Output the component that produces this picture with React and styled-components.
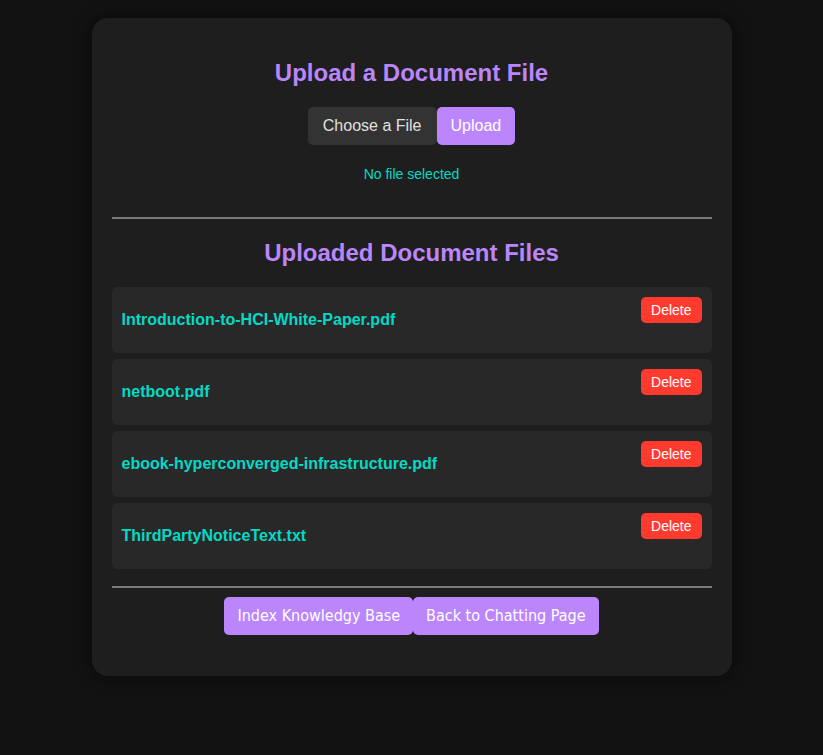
import React from 'react';
import styled, { createGlobalStyle } from 'styled-components';

const files = [
  'Introduction-to-HCI-White-Paper.pdf',
  'netboot.pdf',
  'ebook-hyperconverged-infrastructure.pdf',
  'ThirdPartyNoticeText.txt',
];

const App = () => {
  return (
    <>
      <GlobalStyle />
      <Card>
        <Heading>Upload a Document File</Heading>
        <UploadRow>
          <ChooseLabel>Choose a File</ChooseLabel>
          <UploadButton>Upload</UploadButton>
        </UploadRow>
        <Status>No file selected</Status>
        <Divider />
        <Heading $top={20}>Uploaded Document Files</Heading>
        <FileList>
          {files.map((name) => (
            <FileItem key={name}>
              <FileName>{name}</FileName>
              <DeleteButton>Delete</DeleteButton>
            </FileItem>
          ))}
        </FileList>
        <Divider $top={17} />
        <ActionRow>
          <ActionButton>Index Knowledgy Base</ActionButton>
          <ActionButton>Back to Chatting Page</ActionButton>
        </ActionRow>
      </Card>
    </>
  );
};

export default App;

const GlobalStyle = createGlobalStyle`
  html, body {
    margin: 0;
    background: #121212;
    font-family: "Liberation Sans", Arial, sans-serif;
  }
  body {
    min-height: 755px;
  }
`;

const Card = styled.div`
  width: 600px;
  margin: 18px auto 0;
  padding: 21px 20px 41px;
  background: #1e1e1e;
  border-radius: 16px;
  box-shadow: 0 0 18px rgba(0, 0, 0, 0.55);
  display: flex;
  flex-direction: column;
  align-items: center;
`;

const Heading = styled.h2`
  margin: ${(p) => (p.$top !== undefined ? p.$top : 20)}px 0 20px;
  color: #bb86fc;
  font-size: 24px;
  line-height: 28px;
  font-weight: bold;
  text-align: center;
`;

const UploadRow = styled.div`
  display: flex;
  align-items: center;
`;

const ChooseLabel = styled.label`
  display: block;
  padding: 10px 15px;
  background: #333333;
  color: #e0e0e0;
  font-size: 16px;
  line-height: 18px;
  border-radius: 5px;
  cursor: pointer;
`;

const UploadButton = styled.button`
  padding: 10px 14px;
  border: none;
  background: #bb86fc;
  color: #ffffff;
  font-family: "Liberation Sans", Arial, sans-serif;
  font-size: 16px;
  line-height: 18px;
  border-radius: 5px;
  cursor: pointer;
`;

const Status = styled.p`
  margin: 21px 0 0;
  color: #03dac6;
  font-size: 14px;
  line-height: 16px;
`;

const Divider = styled.div`
  align-self: stretch;
  height: 0;
  border-top: 2px solid #7a7a7a;
  margin-top: ${(p) => (p.$top !== undefined ? p.$top : 35)}px;
`;

const FileList = styled.ul`
  list-style: none;
  margin: 0;
  padding: 0;
  align-self: stretch;
  display: flex;
  flex-direction: column;
  gap: 6px;
`;

const FileItem = styled.li`
  display: flex;
  justify-content: space-between;
  align-items: flex-start;
  height: 66px;
  box-sizing: border-box;
  padding: 10px;
  background: #282828;
  border-radius: 5px;
`;

const FileName = styled.strong`
  align-self: center;
  color: #03dac6;
  font-size: 16px;
  line-height: 18px;
`;

const DeleteButton = styled.button`
  padding: 5px 10px;
  border: none;
  border-radius: 5px;
  background: #ff3b30;
  color: #ffffff;
  font-family: "Liberation Sans", Arial, sans-serif;
  font-size: 14px;
  line-height: 16px;
  cursor: pointer;
`;

const ActionRow = styled.div`
  display: flex;
  margin-top: 9px;
`;

const ActionButton = styled.button`
  padding: 10px 13px;
  border: none;
  border-radius: 5px;
  background: #bb86fc;
  color: #ffffff;
  font-family: "DejaVu Sans Condensed", "DejaVu Sans", sans-serif;
  font-size: 16px;
  line-height: 18px;
  cursor: pointer;
`;
